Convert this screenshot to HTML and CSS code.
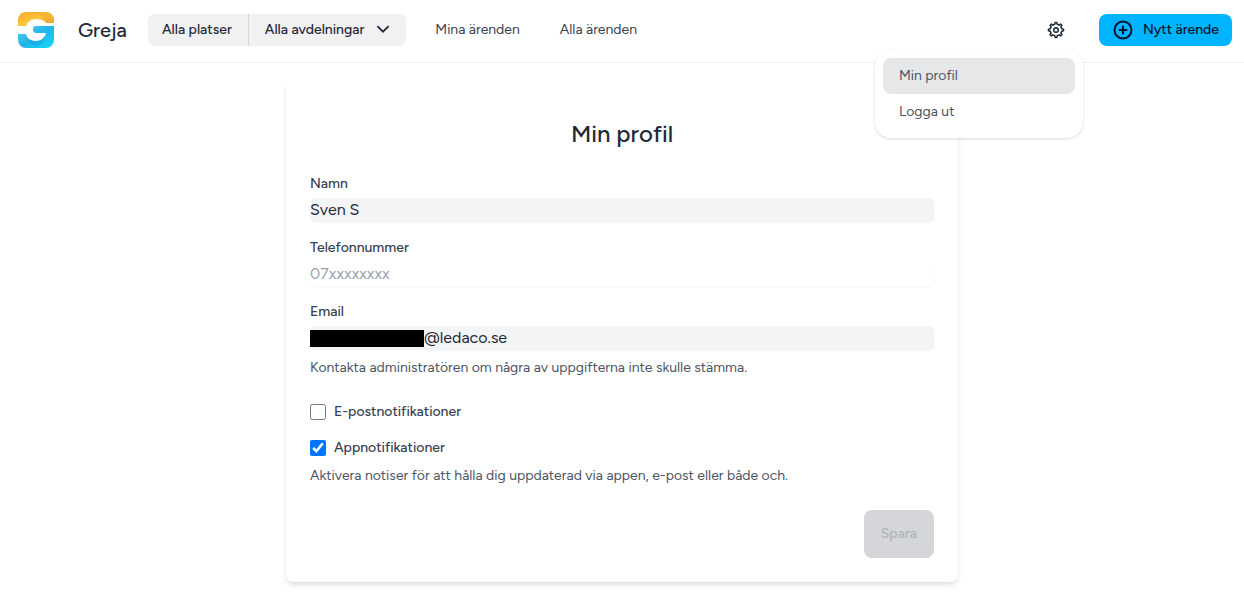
FILE: index.html
```html
<!DOCTYPE html>
<html lang="sv">
<head>
  <meta charset="UTF-8">
  <meta name="viewport" content="width=device-width, initial-scale=1">
  <title>Greja - Min profil</title>
  <link rel="stylesheet" href="styles.css">
</head>
<body>
  <header class="topbar">
    <a class="brand" href="#">
      <svg class="logo" viewBox="0 0 36 36" aria-hidden="true">
        <defs>
          <linearGradient id="gold" x1="0" y1="0" x2="1" y2="1">
            <stop offset="0" stop-color="#f5a52a"/>
            <stop offset="0.5" stop-color="#fcc63c"/>
            <stop offset="1" stop-color="#f0a024"/>
          </linearGradient>
          <linearGradient id="sky" x1="0" y1="0" x2="1" y2="1">
            <stop offset="0" stop-color="#5ccdf2"/>
            <stop offset="0.5" stop-color="#1fb4ea"/>
            <stop offset="1" stop-color="#12dcf6"/>
          </linearGradient>
        </defs>
        <path fill="url(#gold)" d="M8 0H28a8 8 0 0 1 8 8V11H28C26 8 22 7 18 7C13 7 9 10 8 14H0V8a8 8 0 0 1 8-8Z"/>
        <path fill="#eda030" opacity="0.4" d="M14 0H28a8 8 0 0 1 8 8V11H28C25 5 20 2 14 0Z"/>
        <path fill="url(#sky)" d="M0 22H8C9 27 13 29 18 29C23 29 27 26 28 21H18a3 3 0 0 1-3-3V17a3 3 0 0 1 3-3H36V28a8 8 0 0 1-8 8H8a8 8 0 0 1-8-8Z"/>
        <path fill="#18a2df" opacity="0.5" d="M8 22C9 27 13 29 18 29C22 29 25 27 27 24C26 30 23 34 18 34C12 33 9 28 8 22Z"/>
      </svg>
      <span>Greja</span>
    </a>

    <div class="filter">
      <button type="button" class="filter-btn">Alla platser</button>
      <button type="button" class="filter-btn">
        Alla avdelningar
        <svg class="chevron" viewBox="0 0 12 8" aria-hidden="true"><path d="M1 1l5 5 5-5"/></svg>
      </button>
    </div>

    <nav class="nav">
      <a href="#">Mina ärenden</a>
      <a href="#">Alla ärenden</a>
    </nav>

    <div class="actions">
      <div class="settings">
        <button type="button" class="settings-btn" aria-label="Inställningar">
          <svg viewBox="0 0 24 24" aria-hidden="true">
            <path d="M19.6 10.400L18.500 7.700L20 6L18 4L16.300 5.500L13.600 4.400L13 2H11L10.300 4.400L7.700 5.500L6 4L4 6L5.500 7.800L4.400 10.400L2 11V13L4.400 13.700L5.500 16.300L4 18L6 20L7.800 18.500L10.400 19.600L11 22H13L13.600 19.600L16.300 18.500L18 20L20 18L18.500 16.200L19.600 13.600L22 13V11Z"/>
            <circle cx="12" cy="12" r="3"/>
          </svg>
        </button>
        <div class="menu">
          <a class="active" href="#">Min profil</a>
          <a href="#">Logga ut</a>
        </div>
      </div>
      <button type="button" class="new-btn">
        <svg viewBox="0 0 20 20" aria-hidden="true"><circle cx="10" cy="10" r="8.500"/><path d="M10 6.500v7M6.500 10h7"/></svg>
        Nytt ärende
      </button>
    </div>
  </header>

  <main>
    <form class="card">
      <h1>Min profil</h1>

      <div class="field">
        <label for="namn">Namn</label>
        <input type="text" id="namn" value="Sven S" readonly>
      </div>

      <div class="field">
        <label for="telefon">Telefonnummer</label>
        <input type="tel" id="telefon" placeholder="07xxxxxxxx">
      </div>

      <div class="field">
        <label for="email">Email</label>
        <div class="email-row">
          <span class="redacted"></span>
          <input type="text" id="email" value="@ledaco.se" readonly>
        </div>
      </div>
      <p class="help">Kontakta administratören om några av uppgifterna inte skulle stämma.</p>

      <div class="checks">
        <label><input type="checkbox"> E-postnotifikationer</label>
        <label><input type="checkbox" checked> Appnotifikationer</label>
      </div>
      <p class="help">Aktivera notiser för att hålla dig uppdaterad via appen, e-post eller både och.</p>

      <div class="footer">
        <button type="submit" class="save-btn" disabled>Spara</button>
      </div>
    </form>
  </main>
</body>
</html>
```
FILE: styles.css
```css
* {
  box-sizing: border-box;
}
body {
  margin: 0;
  font-family: Figtree, Lato, sans-serif;
  font-size: 14px;
  line-height: 20px;
  color: #1f2937;
  background: #fff;
}
button, input {
  font: inherit;
  color: inherit;
}
button {
  border: none;
  cursor: pointer;
}
a {
  color: inherit;
  text-decoration: none;
}

/* Header */
.topbar {
  display: flex;
  align-items: center;
  height: 63px;
  padding: 0 12px 3px 18px;
  border-bottom: 1px solid #f0f1f2;
}
.brand {
  display: flex;
  align-items: center;
  gap: 24px;
  width: 130px;
  font-size: 20px;
  font-weight: 500;
}
.logo {
  width: 36px;
  height: 36px;
}
.filter {
  display: flex;
  height: 32px;
  border-radius: 8px;
  background: #f1f1f2;
  box-shadow: 0 0 1px #e5e7eb;
}
.filter-btn {
  display: flex;
  align-items: center;
  gap: 12px;
  padding: 0 16px 0 14px;
  font-weight: 500;
  background: none;
}
.filter-btn + .filter-btn {
  padding-left: 16px;
  border-left: 1px solid #d5d6d9;
}
.chevron {
  width: 14px;
  height: 9px;
  fill: none;
  stroke: #1f2937;
  stroke-width: 1.6;
}
.nav {
  display: flex;
  gap: 40px;
  margin-left: 29px;
  color: #374151;
}
.actions {
  display: flex;
  align-items: center;
  gap: 24px;
  margin-left: auto;
}
.settings {
  position: relative;
}
.settings-btn {
  display: flex;
  padding: 10px;
  background: none;
}
.settings-btn svg {
  width: 18px;
  height: 18px;
  fill: none;
  stroke: #1f2937;
  stroke-width: 2;
  stroke-linejoin: round;
}
.menu {
  position: absolute;
  top: 39px;
  right: -8px;
  width: 208px;
  padding: 8px;
  border-radius: 16px;
  background: #fff;
  box-shadow: 0 1px 3px rgba(0, 0, 0, 0.15);
}
.menu a {
  display: block;
  padding: 8px 16px;
  border-radius: 8px;
  color: #4b5563;
}
.menu .active {
  background: #e6e7e9;
}
.new-btn {
  display: flex;
  align-items: center;
  gap: 10px;
  height: 32px;
  padding: 0 13px 0 14px;
  border-radius: 8px;
  font-weight: 500;
  color: #07142b;
  background: #00b4ff;
}
.new-btn svg {
  width: 20px;
  height: 20px;
  fill: none;
  stroke: #07142b;
  stroke-width: 2;
  stroke-linecap: round;
}

/* Profile form */
.card {
  max-width: 672px;
  margin: 16px auto;
  padding: 39px 24px 24px;
  border-radius: 8px;
  background: #fff;
  box-shadow: 0 4px 6px -1px rgba(0, 0, 0, 0.1), 0 2px 4px -2px rgba(0, 0, 0, 0.1);
}
h1 {
  margin: 0 0 24px;
  font-size: 24px;
  font-weight: 500;
  line-height: 32px;
  text-align: center;
}
.field {
  margin-bottom: 16px;
}
.field > label {
  display: block;
  margin-bottom: 4px;
  font-weight: 500;
  color: #374151;
}
.field input {
  display: block;
  width: 100%;
  height: 24px;
  padding: 0 0 2px;
  border: none;
  border-radius: 6px;
  font-size: 16px;
  background: #fff;
  box-shadow: 0 1px 2px rgba(0, 0, 0, 0.05);
}
.field input[readonly] {
  background: #f3f4f6;
}
.field input::placeholder {
  color: #9ca3af;
}
.email-row {
  display: flex;
  align-items: center;
  border-radius: 6px;
  background: #f3f4f6;
}
.redacted {
  width: 114px;
  height: 17px;
  flex-shrink: 0;
  background: #000;
}
.help {
  margin: -8px 0 24px;
  color: #4b5563;
}
.checks {
  display: flex;
  flex-direction: column;
  gap: 16px;
  margin-bottom: 16px;
}
.checks label {
  display: flex;
  align-items: center;
  gap: 8px;
  font-weight: 500;
  color: #374151;
}
.checks input {
  width: 16px;
  height: 16px;
  margin: 0;
}
.footer {
  display: flex;
  justify-content: flex-end;
}
.save-btn {
  height: 48px;
  padding: 0 17px;
  border-radius: 8px;
  font-weight: 500;
  color: #b0b3b9;
  background: #d5d6d9;
}
```
